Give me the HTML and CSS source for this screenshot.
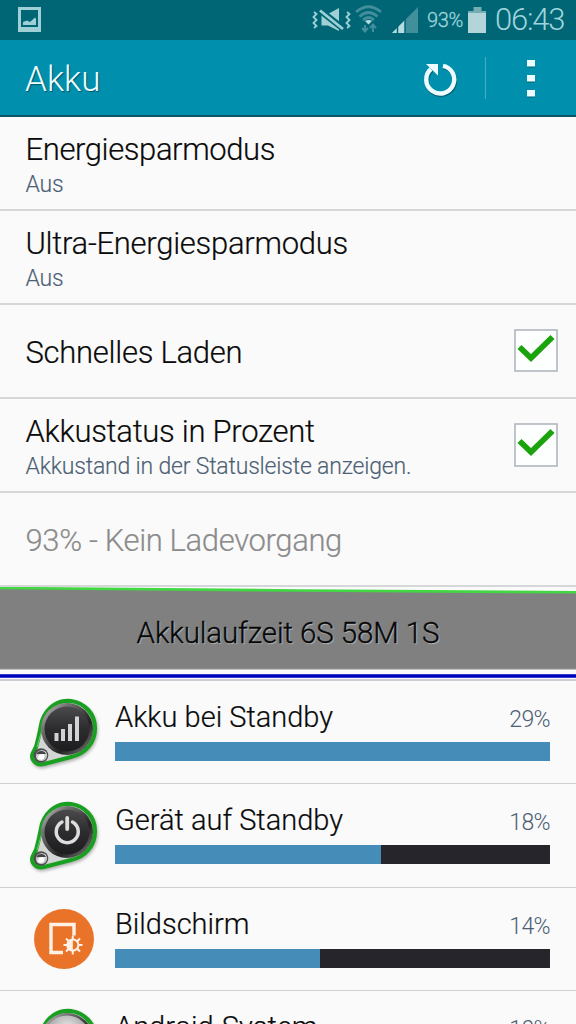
FILE: index.html
```html
<!DOCTYPE html>
<html lang="de">
<head>
<meta charset="utf-8">
<title>Akku</title>
<link rel="stylesheet" href="styles.css">
</head>
<body>
<svg class="defs" width="0" height="0">
  <defs>
    <linearGradient id="disc" x1="0" y1="0" x2="0" y2="1"><stop offset="0" stop-color="#4b4b4e"/><stop offset=".5" stop-color="#2c2c2e"/><stop offset="1" stop-color="#1d1d1f"/></linearGradient>
    <linearGradient id="rim" x1="0" y1="0" x2="1" y2="1"><stop offset="0" stop-color="#d4d4d4"/><stop offset=".25" stop-color="#777"/><stop offset=".65" stop-color="#222"/><stop offset="1" stop-color="#888"/></linearGradient>
    <linearGradient id="metal" x1="0" y1="0" x2="1" y2="1"><stop offset="0" stop-color="#888"/><stop offset=".5" stop-color="#eee"/><stop offset="1" stop-color="#999"/></linearGradient>
    <radialGradient id="silver" cx=".5" cy=".3" r=".7"><stop offset="0" stop-color="#eee"/><stop offset="1" stop-color="#777"/></radialGradient>
    <g id="tag">
      <path d="M7 50C10 40 11 33 13 24C18 9 30 3 42 4C56 6 66 17 66 31C66 46 56 57 42 60L15 67C7 69 1 62 4 56Z" fill="#d4d6d5" stroke="#19a020" stroke-width="4.200"/>
      <path d="M8 50C11 40 13 33 15 25C20 11 31 6 42 6.500" fill="none" stroke="#7cc47f" stroke-width="1"/>
      <circle cx="38" cy="32" r="26" fill="url(#rim)"/>
      <circle cx="12" cy="58.500" r="7.300" fill="#4d4d4f"/>
      <circle cx="12.500" cy="58.500" r="5.600" fill="url(#metal)"/>
      <path d="M7.500 57A5 4.500 0 0 1 17 57Z" fill="#444"/>
      <circle cx="12.500" cy="60" r="2.800" fill="#fff"/>
    </g>
  </defs>
</svg>
<main class="screen">
  <header class="status">
    <svg class="photo" width="24" height="26" viewBox="0 0 24 26"><path d="M0 0H23V25H0ZM3 3V20H20V3Z" fill="#9ed0d6" fill-rule="evenodd"/><path d="M5 18V15L9 13.500L12 15L17 10.500L18 12V18Z" fill="#9ed0d6"/></svg>
    <svg class="signals" width="109" height="34" viewBox="310 4 109 34">
      <path d="M314 12L316.500 14L313.500 17L316.500 20L313.500 23L316.500 26L314 28M347 12L349.500 14L346.500 17L349.500 20L346.500 23L349.500 26L347 28" fill="none" stroke="#9ed0d6" stroke-width="1.800"/>
      <path d="M321.500 14H328L339 8V31L328 25.500H321.500Z" fill="#9ed0d6"/>
      <path d="M322 9L346 28" stroke="#006675" stroke-width="2"/><path d="M319 10.500L342.500 29" stroke="#006675" stroke-width="5"/><path d="M320 10.500L343 29" stroke="#9ed0d6" stroke-width="2.800"/>
      <g fill="none" stroke="#418f9b" stroke-width="2.700"><path d="M356 12Q368.500 1.500 381 12"/><path d="M359.500 16.500Q368.500 8.500 377.500 16.500"/><path d="M363 20Q368.500 15 374 20"/></g>
      <path d="M365 21Q368.500 19 372 21L368.500 24.500Z" fill="#b5dce1"/>
      <path d="M365 25V31M362 28L365 31.500L368 28M373 32V25M370 28L373 24.500L376 28" fill="none" stroke="#418f9b" stroke-width="2"/>
      <path d="M392 33L418 7V33Z" fill="#418f9b"/><path d="M392 33L405 20V33Z" fill="#b5dce1"/><path d="M397.500 25V33M405 17V33" stroke="#006675" stroke-width="1.500"/>
    </svg>
    <span class="charge">93%</span>
    <svg class="cell" width="19" height="26" viewBox="0 0 19 26"><path d="M5.500 0H13.500V4H18V10H0V4H5.500Z" fill="#75adb5"/><path d="M0 6H18V26H0Z" fill="#b3d5da"/></svg>
    <span class="clock">06:43</span>
  </header>
  <nav class="appbar">
    <h1 class="heading">Akku</h1>
    <svg class="actions" width="130" height="46" viewBox="416 56 130 46">
      <path d="M443 65.800A14 14 0 1 1 431 69" fill="none" stroke="#006477" stroke-width="4.400" transform="translate(.7 1.400)"/>
      <path d="M443 65.800A14 14 0 1 1 431 69" fill="none" stroke="#edfcff" stroke-width="4.400"/>
      <path d="M426 64H438V75.500Z" fill="#edfcff"/>
      <path d="M485.500 57V99" stroke="#43acc1" stroke-width="1.200"/>
      <path d="M527 61h8v6.500h-8zM527 76h8v6.500h-8zM527 91h8v6.500h-8z" fill="#00606f"/>
      <path d="M527 60h8v6.500h-8zM527 75h8v6.500h-8zM527 90h8v6.500h-8z" fill="#edfcff"/>
    </svg>
  </nav>
  <section class="settings">
    <div class="row"><div class="copy double"><div class="title t1">Energiesparmodus</div><div class="sub">Aus</div></div></div>
    <div class="row"><div class="copy double"><div class="title t2">Ultra-Energiesparmodus</div><div class="sub">Aus</div></div></div>
    <div class="row"><div class="copy single"><div class="title t3">Schnelles Laden</div></div>
      <svg class="check" width="44" height="44" viewBox="0 0 44 44"><path d="M1 1H43V42H1Z" fill="#fdfefe" stroke="#abb3b9" stroke-width="1.500"/><path d="M5.500 18L17 29L38.500 8" fill="none" stroke="#1ba30e" stroke-width="5.800"/></svg></div>
    <div class="row"><div class="copy double"><div class="title t4">Akkustatus in Prozent</div><div class="sub">Akkustand in der Statusleiste anzeigen.</div></div>
      <svg class="check" width="44" height="44" viewBox="0 0 44 44"><path d="M1 1H43V43H1Z" fill="#fdfefe" stroke="#abb3b9" stroke-width="1.500"/><path d="M5.500 18L17 29L38.500 8" fill="none" stroke="#1ba30e" stroke-width="5.800"/></svg></div>
    <div class="row"><div class="copy single"><div class="title t6">93% - Kein Ladevorgang</div></div></div>
  </section>
  <section class="graph">
    <svg class="plot" width="576" height="94" viewBox="0 587 576 94"><path d="M0 588L300 591L576 592.500V669H0Z" fill="#808080"/><path d="M0 588L300 590.500L576 592.300" fill="none" stroke="#43d744" stroke-width="2.600"/><path d="M0 669.300H576" stroke="#b5b5b5"/><path d="M0 676H576" stroke="#4050e0" stroke-width="4"/><path d="M0 676H576" stroke="#0000b9" stroke-width="2.400"/><path d="M0 680H576" stroke="#d1cbd4" stroke-width="2"/></svg>
    <span class="runtime">Akkulaufzeit 6S 58M 1S</span>
  </section>
  <section class="usage">
    <div class="item">
      <svg class="icon" width="72" height="74" viewBox="0 0 72 74"><use href="#tag"/><circle cx="38" cy="32" r="22.500" fill="url(#disc)"/><path d="M25.500 36h4v8h-4zM32 32h4v12h-4zM39 27h4v17h-4zM46 19.500h4v24.500h-4z" fill="#d2d2d2"/></svg>
      <div class="detail"><div class="line"><span class="name">Akku bei Standby</span><span class="pct">29%</span></div><div class="track"><div class="fill" style="width:100%"></div></div></div>
    </div>
    <div class="item">
      <svg class="icon" width="72" height="74" viewBox="0 0 72 74"><use href="#tag"/><circle cx="38" cy="32" r="22.500" fill="url(#disc)"/><path d="M33 22A11 11 0 1 0 43.500 22" fill="none" stroke="#ddd" stroke-width="3.500" stroke-linecap="round"/><path d="M38.200 18V29" stroke="#ddd" stroke-width="3.800" stroke-linecap="round"/></svg>
      <div class="detail"><div class="line"><span class="name">Gerät auf Standby</span><span class="pct">18%</span></div><div class="track"><div class="fill" style="width:61.200%"></div></div></div>
    </div>
    <div class="item">
      <svg class="icon flat" width="72" height="74" viewBox="0 0 72 74"><circle cx="35" cy="35" r="30" fill="#ea732a"/><g transform="translate(0 1.500)"><path d="M45 30V19H22V47H34" fill="none" stroke="#fff2e4" stroke-width="3.400"/><g stroke="#fff2e4" stroke-width="2"><path d="M43.800 30V34M43.800 45V49M34.500 39.500H38M50 39.500H53.500M37 33L40 36M48 43L51 46M37 46L40 43M48 36L51 33"/><circle cx="43.800" cy="39.500" r="5.600" fill="#ea732a"/></g><path d="M43.800 33.500A6 6 0 0 0 43.800 45.500Z" fill="#fff2e4"/></g></svg>
      <div class="detail"><div class="line"><span class="name">Bildschirm</span><span class="pct">14%</span></div><div class="track"><div class="fill" style="width:47.200%"></div></div></div>
    </div>
    <div class="item">
      <svg class="icon" width="72" height="74" viewBox="0 0 72 74"><use href="#tag"/><circle cx="38" cy="32" r="23.500" fill="url(#silver)"/></svg>
      <div class="detail"><div class="line"><span class="name">Android-System</span><span class="pct">10%</span></div><div class="track"></div></div>
    </div>
  </section>
</main>
</body>
</html>
```
FILE: styles.css
```css
* { box-sizing: border-box; }
body { margin: 0; background: #fafafa; font-family: Roboto, sans-serif; font-weight: 300; }
.defs { position: absolute; }
.screen { width: 576px; height: 1024px; overflow: hidden; background: #fafafa; white-space: nowrap; }
.status { height: 40px; background: #006675; display: flex; align-items: flex-start; color: #9fd5dc; }
.photo { margin: 7px 0 0 18px; flex: none; }
.signals { margin: 4px 0 0 268px; flex: none; }
.charge { width: 40px; margin-left: 8px; font-size: 20px; line-height: 41px; font-weight: 300; letter-spacing: -.4px; -webkit-text-stroke: .3px; }
.cell { margin: 7px 0 0 1px; flex: none; }
.clock { margin-left: 8px; font-size: 31px; line-height: 40px; letter-spacing: -1.2px; }
.appbar { height: 77px; padding: 0 30px 2px 25px; display: flex; justify-content: space-between; background: #0090ad; border-bottom: 2px solid #0b5567; }
.heading { margin: 0; font-weight: 300; font-size: 35px; line-height: 79px; color: #edfcff; text-shadow: 1px 1px 1px #00566a; }
.actions { margin-top: 16px; flex: none; }
.row { height: 94px; border-bottom: 2px solid #d6d7d8; padding: 0 18px 0 25.500px; display: flex; justify-content: space-between; align-items: center; }
.double { padding-top: 6px; }
.single { padding-top: 3px; }
.title { font-size: 31px; line-height: 38px; color: #0a0a0a; -webkit-text-stroke: .2px; }
.t1 { letter-spacing: -.4px; }
.t2, .t3, .t4 { letter-spacing: -.28px; }
.t6 { color: #8b8b8b; letter-spacing: -.36px; }
.sub { font-size: 23px; line-height: 32px; letter-spacing: -.19px; color: #4c6074; -webkit-text-stroke: .15px; }
.check { flex: none; }
.graph { height: 94px; display: grid; }
.plot, .runtime { grid-area: 1 / 1; }
.runtime { justify-self: center; font-size: 29.500px; line-height: 92px; letter-spacing: -.1px; color: #080808; -webkit-text-stroke: .4px; text-shadow: 1px 1px 1px #bcbcbc; }
.usage { margin-top: -.4px; }
.item { height: 103.500px; border-bottom: 1.500px solid #cfcfd0; padding: 16px 26px 0 29px; display: flex; gap: 14px; }
.icon { flex: none; filter: drop-shadow(1px 2px 1.500px #7778); }
.flat { filter: none; }
.detail { flex: 1; }
.line { display: flex; justify-content: space-between; height: 45px; line-height: 41px; }
.name { font-size: 29px; color: #0a0a0a; -webkit-text-stroke: .2px; }
.pct { font-size: 23px; line-height: 46px; letter-spacing: -.6px; color: #4c6074; }
.track { height: 19px; background: #25252b; }
.fill { height: 100%; background: #468cb8; }
```
